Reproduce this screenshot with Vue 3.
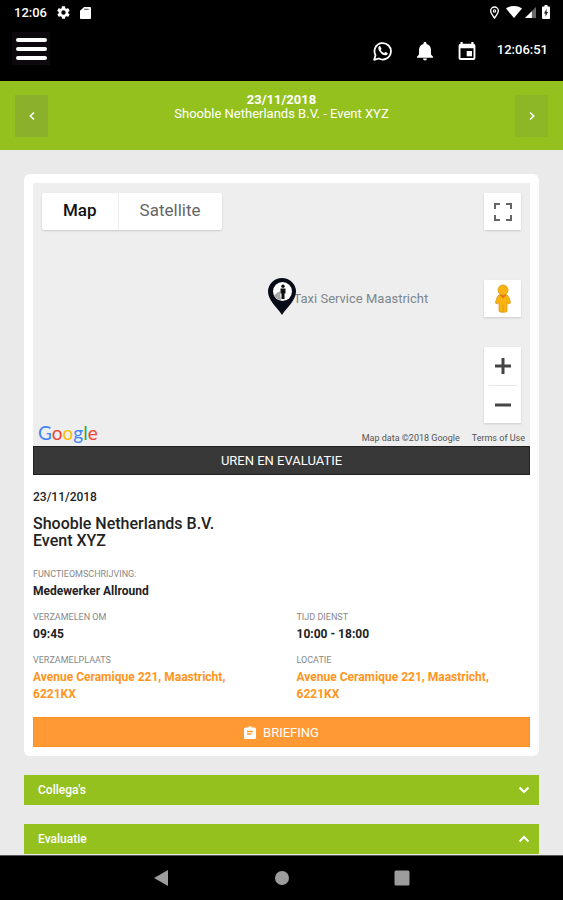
<template>
  <div class="screen">
    <div class="status-bar">
      <div class="status-group">
        <span class="status-time">12:06</span>
        <svg viewBox="0 0 24 24" width="15" height="15" fill="#fff">
          <path d="M19.4 13c0-.3.1-.6.1-1s0-.7-.1-1l2.1-1.600c.2-.2.3-.4.1-.7l-2-3.400c-.1-.2-.4-.3-.6-.2l-2.500 1c-.5-.4-1.100-.7-1.700-1l-.4-2.600c0-.3-.2-.5-.5-.5h-4c-.2 0-.5.2-.5.4l-.4 2.700c-.6.2-1.100.6-1.700 1l-2.500-1c-.2-.1-.5 0-.6.2l-2 3.400c-.1.3-.1.6.1.7L4.500 11c0 .3-.1.6-.1 1s0 .7.1 1l-2.100 1.600c-.2.2-.3.4-.1.7l2 3.400c.1.2.4.3.6.2l2.500-1c.5.4 1.100.7 1.700 1l.4 2.600c0 .3.2.5.5.5h4c.2 0 .5-.2.5-.4l.4-2.700c.6-.2 1.100-.6 1.700-1l2.500 1c.2.1.5 0 .6-.2l2-3.400c.1-.2.1-.5-.1-.7L19.400 13zM12 15.500a3.500 3.500 0 1 1 0-7 3.500 3.500 0 0 1 0 7z"/>
        </svg>
        <svg viewBox="0 0 12 14" width="11" height="13">
          <path d="M4.500 1H11a1 1 0 0 1 1 1v11a1 1 0 0 1-1 1H1a1 1 0 0 1-1-1V5z" fill="#fff"/>
          <path d="M4.500 3.500h5" stroke="#555" stroke-width="1.200"/>
        </svg>
      </div>
      <div class="status-group right">
        <svg viewBox="0 0 12 14" width="11" height="13" fill="none" stroke="#fff">
          <path d="M6 13C3.500 9.800 1.800 7.500 1.800 5.200a4.200 4.200 0 0 1 8.400 0C10.200 7.500 8.500 9.800 6 13z" stroke-width="1.500"/>
          <circle cx="6" cy="5.300" r="1.300" stroke-width="1.200"/>
        </svg>
        <svg class="wifi-icon" viewBox="0 0 16 12" width="16" height="12" fill="#fff">
          <path d="M8 12 0 2.500C4.500-.8 11.500-.8 16 2.500z"/>
        </svg>
        <svg viewBox="0 0 12 12" width="11" height="11">
          <path d="M12 0v12H0z" fill="#666"/>
          <path d="M7.500 4.500V12H0z" fill="#fff"/>
        </svg>
        <svg class="battery-icon" viewBox="0 0 8 14" width="8" height="14">
          <path d="M2.500 0h3v1.500H7a1 1 0 0 1 1 1V13a1 1 0 0 1-1 1H1a1 1 0 0 1-1-1V2.500a1 1 0 0 1 1-1h1.500z" fill="#fff"/>
          <path d="M4.600 3.800 2 8.500h1.500v3.200L6 7H4.600z" fill="#222"/>
        </svg>
      </div>
    </div>

    <header class="app-bar">
      <button class="menu-btn" aria-label="Menu">
        <span class="bar"></span>
        <span class="bar"></span>
        <span class="bar"></span>
      </button>
      <div class="app-actions">
        <button class="icon-btn" aria-label="WhatsApp">
          <svg viewBox="0 0 20 20" width="20" height="20">
            <path d="M1.200 18.800 2.500 14.200A8.200 8.200 0 1 1 5.800 17.500z" fill="none" stroke="#fff" stroke-width="1.800" stroke-linejoin="round"/>
            <path d="M7.300 5.400c-.3-.6-.8-.5-1.200-.1-1.300 1.300-.9 3.300.7 5.500 1.900 2.600 4.100 3.900 6.100 3.500 1.200-.3 1.900-1.100 1.800-2.100 0-.3-1.900-1.300-2.300-1.300-.5 0-.9 1.300-1.400 1.200-1-.3-2.700-1.700-3.200-3-.1-.4.7-.9.7-1.400-.1-.6-.8-1.700-1.200-2.300z" fill="#fff"/>
          </svg>
        </button>
        <button class="icon-btn" aria-label="Meldingen">
          <svg viewBox="0 0 20 20" width="20" height="20" fill="#fff">
            <path d="M10 19.500a2 2 0 0 0 2-1.900H8a2 2 0 0 0 2 1.900zM16 13.500V9c0-3-1.700-5.400-4.500-6V2.200a1.500 1.500 0 0 0-3 0V3C5.700 3.600 4 6 4 9v4.500l-2 2.200v1h16v-1z"/>
          </svg>
        </button>
        <button class="icon-btn" aria-label="Agenda">
          <svg viewBox="0 0 20 20" width="20" height="20">
            <path fill-rule="evenodd" d="M3.500 1h2.200v1.800h8.600V1h2.200v1.800a1.900 1.900 0 0 1 1.900 1.900v12.400a1.900 1.900 0 0 1-1.900 1.900h-13a1.900 1.900 0 0 1-1.900-1.900V4.700a1.900 1.900 0 0 1 1.900-1.900zM3.500 7.200v9.900h13V7.200z" fill="#fff"/>
            <path d="M9.700 10h5.300v5.300H9.700z" fill="#fff"/>
          </svg>
        </button>
      </div>
      <span class="clock">12:06:51</span>
    </header>

    <div class="day-bar">
      <button class="day-btn" aria-label="Vorige">
        <svg viewBox="0 0 8 10" width="8" height="10"><path d="M6 1.500 2.300 5 6 8.500"/></svg>
      </button>
      <div class="day-title">
        <strong>23/11/2018</strong>
        <span>Shooble Netherlands B.V. - Event XYZ</span>
      </div>
      <button class="day-btn next" aria-label="Volgende">
        <svg viewBox="0 0 8 10" width="8" height="10"><path d="M2 1.500 5.700 5 2 8.500"/></svg>
      </button>
    </div>

    <main class="content">
      <section class="card">
        <div class="map">
          <div class="map-types">
            <button class="map-type active">Map</button>
            <button class="map-type">Satellite</button>
          </div>

          <div class="map-place">
            <svg viewBox="0 0 28 37" width="28" height="37">
              <path d="M14 37C9 29 0 22.500 0 13.500a14 13.500 0 0 1 28 0C28 22.500 19 29 14 37z" fill="#080c18"/>
              <circle cx="14.500" cy="13.500" r="9.500" fill="#fff"/>
              <path d="M6 17.500c2-1.500 3.500-4 6-4l1 8.500c-3 0-5.500-1.500-7-4.500z" fill="#aaa"/>
              <circle cx="15" cy="8.200" r="1.700" fill="#111"/>
              <path d="M12.500 10.500h5v5h-1v5.500h-3v-5.500h-1z" fill="#111"/>
            </svg>
            <span>Taxi Service Maastricht</span>
          </div>

          <div class="map-controls">
            <button class="map-btn" aria-label="Volledig scherm">
              <svg viewBox="0 0 18 18" width="18" height="18" fill="none" stroke="#666" stroke-width="2">
                <path d="M1 6V1h5M12 1h5v5M17 12v5h-5M6 17H1v-5"/>
              </svg>
            </button>
            <button class="map-btn pegman" aria-label="Street View">
              <svg viewBox="0 0 18 30" width="18" height="30">
                <path d="M5.500 10.500h7c2 1 3.500 5.500 4 8.500l-2.200 1-1.300-2v9.500c-1.500 1-6.500 1-8 0V18l-1.300 2-2.200-1c.5-3 2-7.500 4-8.500z" fill="#f9b40f" stroke="#d99a1c" stroke-width=".8"/>
                <path d="M9 20.500V28" stroke="#d99a1c"/>
                <path d="m5.500 11 3.500 3.500 3.500-3.500z" fill="#e8711c"/>
                <circle cx="9" cy="6" r="5" fill="#f9b40f" stroke="#d99a1c" stroke-width=".8"/>
              </svg>
            </button>
            <div class="zoom">
              <button aria-label="Inzoomen">
                <svg viewBox="0 0 18 18" width="18" height="18" stroke="#444" stroke-width="3"><path d="M1 9h16M9 1v16"/></svg>
              </button>
              <button aria-label="Uitzoomen">
                <svg viewBox="0 0 18 18" width="18" height="18" stroke="#444" stroke-width="3"><path d="M1 9h16"/></svg>
              </button>
            </div>
          </div>

          <div class="map-footer">
            <div class="google">
              <span class="blue">G</span><span class="red">o</span><span class="yellow">o</span><span class="blue">g</span><span class="green">l</span><span class="red">e</span>
            </div>
            <div class="map-legal">
              <span>Map data ©2018 Google</span>
              <a href="#">Terms of Use</a>
            </div>
          </div>
        </div>

        <button class="btn dark">UREN EN EVALUATIE</button>

        <div class="date">23/11/2018</div>
        <h1 class="title">Shooble Netherlands B.V.<br>Event XYZ</h1>

        <dl class="details">
          <div
            v-for="item in details"
            :key="item.label"
            class="detail"
            :class="{ wide: item.wide }"
          >
            <dt>{{ item.label }}</dt>
            <dd>
              <a v-if="item.link" href="#">{{ item.value }}</a>
              <template v-else>{{ item.value }}</template>
            </dd>
          </div>
        </dl>

        <button class="btn orange">
          <svg viewBox="0 0 12 13" width="12" height="13">
            <path d="M1.500 1.500h2.800a1.800 1.800 0 0 1 3.400 0h2.800A1.500 1.500 0 0 1 12 3v8.500a1.500 1.500 0 0 1-1.500 1.500h-9A1.500 1.500 0 0 1 0 11.500V3a1.500 1.500 0 0 1 1.500-1.500z" fill="#fff"/>
            <path d="M3 5.500h6M3 8h4.500" stroke="#ff9933" stroke-width="1.300"/>
          </svg>
          BRIEFING
        </button>
      </section>

      <button
        v-for="panel in panels"
        :key="panel.label"
        class="panel"
        :aria-expanded="panel.open"
        @click="panel.open = !panel.open"
      >
        {{ panel.label }}
        <svg viewBox="0 0 12 8" width="12" height="8">
          <path :d="panel.open ? 'M1.500 6.500 6 2l4.500 4.500' : 'M1.500 1.500 6 6l4.500-4.500'"/>
        </svg>
      </button>
    </main>

    <nav class="system-nav">
      <button aria-label="Terug">
        <svg viewBox="0 0 16 16" width="16" height="16"><path d="M14 0v16L0 8z"/></svg>
      </button>
      <button aria-label="Start">
        <svg viewBox="0 0 16 16" width="16" height="16"><circle cx="8" cy="8" r="7"/></svg>
      </button>
      <button aria-label="Overzicht">
        <svg viewBox="0 0 16 16" width="16" height="16"><rect x=".5" y=".5" width="15" height="15" rx="1.500"/></svg>
      </button>
    </nav>
  </div>
</template>

<script setup>
import { ref } from 'vue'

const details = [
  { label: 'FUNCTIEOMSCHRIJVING:', value: 'Medewerker Allround', wide: true },
  { label: 'VERZAMELEN OM', value: '09:45' },
  { label: 'TIJD DIENST', value: '10:00 - 18:00' },
  { label: 'VERZAMELPLAATS', value: 'Avenue Ceramique 221, Maastricht, 6221KX', link: true },
  { label: 'LOCATIE', value: 'Avenue Ceramique 221, Maastricht, 6221KX', link: true }
]

const panels = ref([
  { label: "Collega's", open: false },
  { label: 'Evaluatie', open: true }
])
</script>

<style>
body {
  margin: 0;
  background: #eaeaea;
}
</style>

<style scoped>
.screen {
  display: flex;
  flex-direction: column;
  height: 100vh;
  font-family: Roboto, 'Liberation Sans', sans-serif;
  font-size: 12px;
  color: #222;
}

.screen * {
  box-sizing: border-box;
}

button {
  padding: 0;
  border: none;
  background: none;
  font: inherit;
  color: inherit;
  cursor: pointer;
}

svg {
  display: block;
  flex-shrink: 0;
}

/* Status bar */
.status-bar {
  display: flex;
  flex-shrink: 0;
  justify-content: space-between;
  height: 24px;
  padding: 0 13px 0 14px;
  background: #000;
  color: #fff;
}

.status-group {
  display: flex;
  align-items: center;
  gap: 9px;
}

.status-group.right {
  gap: 3px;
}

.status-time {
  font-size: 13px;
  font-weight: 500;
}

.wifi-icon,
.battery-icon {
  margin-left: 3px;
}

/* App bar */
.app-bar {
  display: flex;
  flex-shrink: 0;
  align-items: flex-start;
  gap: 20px;
  height: 57px;
  padding: 8px 15px 0 12px;
  background: #000;
  color: #fff;
}

.menu-btn {
  display: flex;
  flex-direction: column;
  align-items: center;
  justify-content: center;
  gap: 5px;
  width: 38px;
  height: 33px;
  background: #0c080e;
}

.bar {
  width: 31px;
  height: 4px;
  border-radius: 2px;
  background: #fff;
}

.app-actions {
  display: flex;
  align-items: center;
  gap: 22px;
  height: 38px;
  margin-left: auto;
}

.clock {
  font-size: 13px;
  font-weight: 500;
  line-height: 36px;
}

/* Day bar */
.day-bar {
  display: flex;
  flex-shrink: 0;
  align-items: center;
  justify-content: space-between;
  height: 69px;
  padding: 0 15px;
  background: #95c11f;
  color: #fff;
}

.day-btn {
  display: flex;
  align-items: center;
  justify-content: center;
  width: 33px;
  height: 42px;
  background: #8bb02b;
}

.day-btn.next {
  background: #8db726;
}

.day-btn path {
  fill: none;
  stroke: #fff;
  stroke-width: 1.6;
}

.day-title {
  display: flex;
  flex-direction: column;
  align-self: flex-start;
  align-items: center;
  padding-top: 12px;
  font-size: 13px;
  line-height: 14px;
}

/* Content */
.content {
  display: flex;
  flex: 1;
  flex-direction: column;
  gap: 19px;
  min-height: 0;
  padding: 24px 24px 0;
  overflow: hidden;
  background: #eaeaea;
}

.card {
  flex-shrink: 0;
  padding: 9px;
  border-radius: 6px;
  background: #fff;
}

.map {
  position: relative;
  display: flex;
  flex-direction: column;
  align-items: flex-start;
  justify-content: space-between;
  height: 263px;
  padding: 10px 9px 0;
  background: #eee;
}

.map-types {
  display: flex;
  border-radius: 2px;
  background: #fff;
  box-shadow: 0 1px 2px rgba(0, 0, 0, 0.15);
}

.map-type {
  height: 37px;
  padding: 0 21px 3px;
  font-size: 17px;
  color: #666;
}

.map-type.active {
  border-right: 1px solid #eee;
  font-weight: 500;
  color: #111;
}

.map-place {
  position: absolute;
  top: 95px;
  left: calc(50% - 14px);
  display: flex;
  align-items: center;
  font-size: 13px;
  line-height: 16px;
  color: #7d878d;
}

.map-place span {
  margin: 5px 0 0 -2px;
}

.map-place svg {
  z-index: 1;
}

.map-controls {
  position: absolute;
  top: 10px;
  right: 9px;
  bottom: 23px;
  display: flex;
  flex-direction: column;
}

.map-btn,
.zoom {
  width: 37px;
  background: #fff;
  box-shadow: 0 1px 2px rgba(0, 0, 0, 0.15);
}

.map-btn {
  display: flex;
  align-items: center;
  justify-content: center;
  height: 37px;
}

.pegman {
  margin: auto 0 30px;
}

.zoom {
  display: flex;
  flex-direction: column;
  align-items: center;
}

.zoom button {
  display: flex;
  align-items: center;
  justify-content: center;
  width: 28px;
  height: 38px;
}

.zoom button + button {
  border-top: 1px solid #e6e6e6;
}

.map-footer {
  display: flex;
  align-items: flex-end;
  justify-content: space-between;
  align-self: stretch;
  margin: 0 -4px;
}

.google {
  font-family: Lato, 'Open Sans', sans-serif;
  font-size: 19px;
  line-height: 26px;
}

.blue { color: #4285f4; }
.red { color: #ea4335; }
.yellow { color: #fbbc05; }
.green { color: #34a853; }

.map-legal {
  display: flex;
  gap: 12px;
  font-size: 9px;
  line-height: 16px;
  color: #555;
}

.map-legal a {
  color: inherit;
  text-decoration: none;
}

.btn {
  display: flex;
  align-items: center;
  justify-content: center;
  gap: 7px;
  width: 100%;
  font-size: 13px;
  color: #fff;
}

.btn.dark {
  height: 29px;
  border: 1px solid #222;
  background: #383838;
}

.btn.orange {
  height: 30px;
  margin-top: 14px;
  border: 1px solid #ff8f1f;
  background: #ff9933;
}

.date {
  margin-top: 14px;
  font-weight: 500;
  line-height: 17px;
}

.title {
  margin: 9px 0 17px;
  font-size: 16px;
  font-weight: 500;
  line-height: 17px;
}

.details {
  display: grid;
  grid-template-columns: 1fr 1fr;
  gap: 9px 30px;
  margin: 0;
  line-height: 17px;
}

.detail.wide {
  grid-column: 1 / -1;
}

.detail dt {
  font-size: 9px;
  color: #888;
}

.detail dd {
  margin: 0;
  font-weight: 700;
}

.detail a {
  color: #ff9420;
  text-decoration: none;
}

.panel {
  display: flex;
  flex-shrink: 0;
  align-items: center;
  justify-content: space-between;
  height: 30px;
  padding: 0 9px 0 14px;
  background: #95c11f;
  font-weight: 500;
  color: #fff;
}

.panel path {
  fill: none;
  stroke: #fff;
  stroke-width: 2;
}

/* System navigation */
.system-nav {
  display: flex;
  flex-shrink: 0;
  align-items: center;
  justify-content: center;
  gap: 104px;
  height: 45px;
  border-top: 1px solid #555;
  background: #000;
}

.system-nav svg {
  fill: #9c9c9c;
}
</style>
